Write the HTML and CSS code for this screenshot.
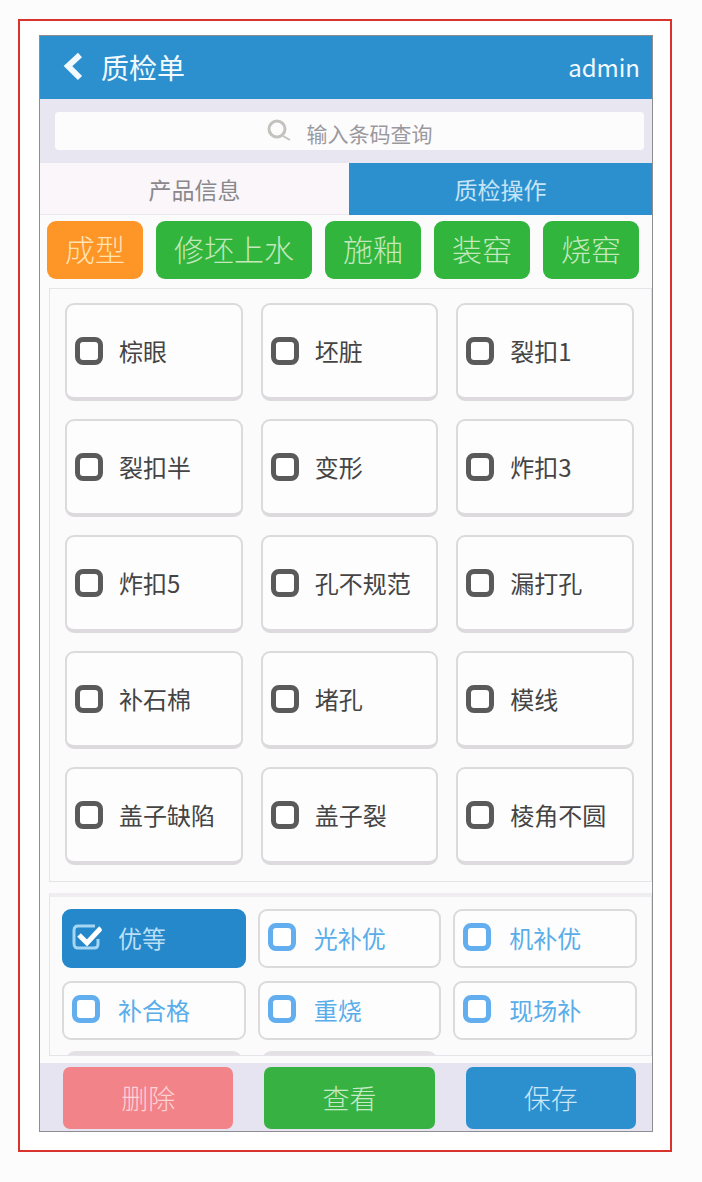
FILE: index.html
```html
<!DOCTYPE html>
<html lang="zh-CN">
<head>
  <meta charset="UTF-8">
  <meta name="viewport" content="width=device-width, initial-scale=1.0">
  <title>质检单</title>
  <link rel="stylesheet" href="styles.css">
</head>
<body>
  <div class="frame">
    <div class="phone">
      <header class="header">
        <a href="#" class="back" aria-label="返回">
          <svg width="20" height="30" viewBox="0 0 20 30"><path d="M17 3 5 14l12 12" fill="none" stroke="#f2faff" stroke-width="6"/></svg>
        </a>
        <h1>质检单</h1>
        <span class="user">admin</span>
      </header>

      <div class="search">
        <label class="search-box">
          <svg width="24" height="24" viewBox="0 0 24 24" fill="none" stroke="#c4c2be"><circle cx="10" cy="10" r="8" stroke-width="3"/><path d="M16 17l7 4" stroke-width="2"/></svg>
          <input type="text" placeholder="输入条码查询" aria-label="输入条码查询">
        </label>
      </div>

      <nav class="tabs">
        <a href="#">产品信息</a>
        <a href="#" class="active">质检操作</a>
      </nav>

      <div class="stages">
        <button type="button" class="current">成型</button>
        <button type="button">修坯上水</button>
        <button type="button">施釉</button>
        <button type="button">装窑</button>
        <button type="button">烧窑</button>
      </div>

      <div class="panel defects">
        <label class="item"><input type="checkbox"><span>棕眼</span></label>
        <label class="item"><input type="checkbox"><span>坯脏</span></label>
        <label class="item"><input type="checkbox"><span>裂扣1</span></label>
        <label class="item"><input type="checkbox"><span>裂扣半</span></label>
        <label class="item"><input type="checkbox"><span>变形</span></label>
        <label class="item"><input type="checkbox"><span>炸扣3</span></label>
        <label class="item"><input type="checkbox"><span>炸扣5</span></label>
        <label class="item"><input type="checkbox"><span>孔不规范</span></label>
        <label class="item"><input type="checkbox"><span>漏打孔</span></label>
        <label class="item"><input type="checkbox"><span>补石棉</span></label>
        <label class="item"><input type="checkbox"><span>堵孔</span></label>
        <label class="item"><input type="checkbox"><span>模线</span></label>
        <label class="item"><input type="checkbox"><span>盖子缺陷</span></label>
        <label class="item"><input type="checkbox"><span>盖子裂</span></label>
        <label class="item"><input type="checkbox"><span>棱角不圆</span></label>
      </div>

      <div class="panel grades">
        <label class="item checked"><input type="checkbox" checked><span>优等</span></label>
        <label class="item"><input type="checkbox"><span>光补优</span></label>
        <label class="item"><input type="checkbox"><span>机补优</span></label>
        <label class="item"><input type="checkbox"><span>补合格</span></label>
        <label class="item"><input type="checkbox"><span>重烧</span></label>
        <label class="item"><input type="checkbox"><span>现场补</span></label>
        <div class="more"></div>
        <div class="more"></div>
      </div>

      <footer class="footer">
        <button type="button" class="del">删除</button>
        <button type="button" class="view">查看</button>
        <button type="button" class="save">保存</button>
      </footer>
    </div>
  </div>
</body>
</html>
```
FILE: styles.css
```css
*{
  box-sizing: border-box;
  margin: 0;
  padding: 0;
}
body{
  padding: 19px 30px 30px 18px;
  background: #fdfcfd;
  font-family: "Noto Sans CJK SC", sans-serif;
  font-size: 24px;
  color: #444;
}
a{
  color: inherit;
  text-decoration: none;
}
button,input{
  font-family: inherit;
  border: none;
}
.frame{
  padding: 14px 17px 18px 19px;
  border: 2px solid #d9332e;
  background: #fff;
}
.phone{
  border: 1px solid #8d8d92;
  background: #fcfbfc;
}

/* 顶部 */
.header{
  display: flex;
  align-items: center;
  height: 63px;
  padding: 0 12px 2px 23px;
  background: #2c90cf;
  color: #f2faff;
}
.back{
  display: flex;
  margin-right: 18px;
}
.header h1{
  font-size: 28px;
  font-weight: 400;
  line-height: 40px;
}
.user{
  margin-left: auto;
  font-size: 24px;
}
.search{
  padding: 13px 8px 13px 15px;
  background: #e8e6f0;
}
.search-box{
  display: flex;
  align-items: center;
  justify-content: center;
  gap: 16px;
  height: 38px;
  padding-left: 6px;
  border-radius: 4px;
  background: #fdfcfd;
}
.search-box input{
  width: 132px;
  padding-top: 4px;
  background: transparent;
  font-size: 21px;
  line-height: 32px;
  outline: none;
}
.search-box input::placeholder{
  color: #9a999e;
}
.tabs{
  display: grid;
  grid-template-columns: 103fr 101fr;
  margin-bottom: 6px;
}
.tabs a{
  height: 52px;
  border-bottom: 1px solid #ece9ee;
  background: #faf6f9;
  color: #8a888c;
  font-size: 23px;
  line-height: 52px;
  text-align: center;
}
.tabs .active{
  border-color: #2c90cf;
  background: #2c90cf;
  color: #c5e4f7;
}
.stages{
  display: flex;
  gap: 13px;
  padding: 0 7px 9px;
}
.stages button{
  height: 58px;
  padding: 0 18px 4px;
  border-radius: 9px;
  background: #32b53d;
  color: #c3e8bb;
  font-size: 30px;
  font-weight: 300;
  line-height: 54px;
  white-space: nowrap;
}
.stages .current{
  background: #fd9527;
  color: #ffe3b3;
}

/* 选项 */
.panel{
  display: grid;
  grid-template-columns: repeat(3, 1fr);
  margin-left: 9px;
  border: 1px solid #e6e4e8;
}
.item{
  display: flex;
  align-items: center;
  border: 2px solid #dcdadd;
  border-radius: 9px;
  background: #fdfdfe;
  white-space: nowrap;
}
.item input{
  flex: none;
  width: 28px;
  height: 28px;
  margin-right: 16px;
  border: 5px solid #5a5a5a;
  border-radius: 8px;
  background: #fff;
  appearance: none;
}
.item span{
  padding-bottom: 2px;
}
.defects{
  gap: 18px;
  margin-bottom: 11px;
  padding: 14px 17px 16px 15px;
}
.defects .item{
  height: 98px;
  padding-left: 8px;
  border-bottom-width: 4px;
}
.grades{
  gap: 13px 12px;
  height: 163px;
  margin-bottom: 7px;
  padding: 12px 14px 0 12px;
  border-top: 4px solid #efedf0;
  overflow: hidden;
}
.grades .item{
  height: 59px;
  padding-left: 8px;
  color: #59aeea;
}
.grades .item input{
  margin: 0 18px 4px 0;
  border-color: #62aeee;
}
.grades .checked{
  border-color: #2488ca;
  background: #2488ca;
  color: #b9def5;
}
.grades .checked input{
  width: 30px;
  margin-right: 16px;
  border: none;
  background: url("data:image/svg+xml,%3Csvg xmlns='http://www.w3.org/2000/svg' viewBox='0 0 30 28' fill='none'%3E%3Cpath d='M23 3H6Q2 3 2 7v14q0 4 4 4h16q4 0 4-4v-5' stroke='%23a5d6f4' stroke-width='3'/%3E%3Cpath d='M7 12l8 8L29 5' stroke='%23fff' stroke-width='5'/%3E%3C/svg%3E") no-repeat center;
}
/* 未滚动到的下一行 */
.more{
  height: 58px;
  margin: -2px 4px 0;
  border-top: 4px solid #e3e1e4;
  border-radius: 9px;
}

/* 底部 */
.footer{
  display: grid;
  grid-template-columns: repeat(3, 1fr);
  gap: 31px;
  padding: 4px 16px 2px 23px;
  background: #e6e4f1;
}
.footer button{
  height: 62px;
  border-radius: 7px;
  font-size: 27px;
  font-weight: 300;
  line-height: 60px;
}
.footer .del{
  background: #f28489;
  color: #fbd3d5;
}
.footer .view{
  background: #37b242;
  color: #c5eac4;
}
.footer .save{
  background: #2c90cf;
  color: #cae6f7;
}
```
